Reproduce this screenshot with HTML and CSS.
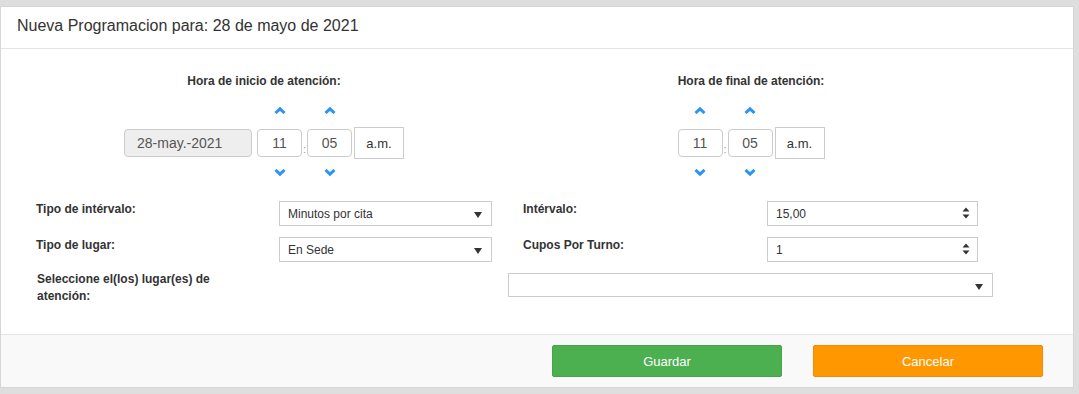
FILE: index.html
```html
<!DOCTYPE html>
<html>
  <head>
    <meta charset="utf-8">
    <title>Nueva Programacion</title>
    <link rel="stylesheet" href="styles.css">
  </head>
  <body>
  <div class="modal">
    <div class="modal-header">
      <h4 class="modal-title">Nueva Programacion para: 28 de mayo de 2021</h4>
    </div>
    <div class="modal-body">
      <div class="times">
        <div class="time-col">
          <div class="time-label">Hora de inicio de atención:</div>
          <div class="picker">
            <div class="date-input">28-may.-2021</div>
            <div class="spin">
              <span class="chev"><svg width="12" height="7" viewBox="0 0 12 7"><polyline points="1.5,6 6,1.8 10.5,6"/></svg></span>
              <div class="time-input">11</div>
              <span class="chev down"><svg width="12" height="7" viewBox="0 0 12 7"><polyline points="1.5,1 6,5.2 10.5,1"/></svg></span>
            </div>
            <span class="colon">:</span>
            <div class="spin">
              <span class="chev"><svg width="12" height="7" viewBox="0 0 12 7"><polyline points="1.5,6 6,1.8 10.5,6"/></svg></span>
              <div class="time-input">05</div>
              <span class="chev down"><svg width="12" height="7" viewBox="0 0 12 7"><polyline points="1.5,1 6,5.2 10.5,1"/></svg></span>
            </div>
            <div class="ampm">a.m.</div>
          </div>
        </div>
        <div class="time-col">
          <div class="time-label">Hora de final de atención:</div>
          <div class="picker">
            <div class="spin">
              <span class="chev"><svg width="12" height="7" viewBox="0 0 12 7"><polyline points="1.5,6 6,1.8 10.5,6"/></svg></span>
              <div class="time-input">11</div>
              <span class="chev down"><svg width="12" height="7" viewBox="0 0 12 7"><polyline points="1.5,1 6,5.2 10.5,1"/></svg></span>
            </div>
            <span class="colon">:</span>
            <div class="spin">
              <span class="chev"><svg width="12" height="7" viewBox="0 0 12 7"><polyline points="1.5,6 6,1.8 10.5,6"/></svg></span>
              <div class="time-input">05</div>
              <span class="chev down"><svg width="12" height="7" viewBox="0 0 12 7"><polyline points="1.5,1 6,5.2 10.5,1"/></svg></span>
            </div>
            <div class="ampm">a.m.</div>
          </div>
        </div>
      </div>

      <div class="form-row">
        <label class="lbl">Tipo de intérvalo:</label>
        <div class="select">Minutos por cita<span class="caret"></span></div>
        <span></span>
        <label class="lbl">Intérvalo:</label>
        <div class="number">15,00<svg class="spinner" width="8" height="12" viewBox="0 0 8 12"><polygon points="4,0.5 7.5,4.5 0.5,4.5"/><polygon points="0.5,7.5 7.5,7.5 4,11.5"/></svg></div>
      </div>
      <div class="form-row">
        <label class="lbl">Tipo de lugar:</label>
        <div class="select">En Sede<span class="caret"></span></div>
        <span></span>
        <label class="lbl">Cupos Por Turno:</label>
        <div class="number">1<svg class="spinner" width="8" height="12" viewBox="0 0 8 12"><polygon points="4,0.5 7.5,4.5 0.5,4.5"/><polygon points="0.5,7.5 7.5,7.5 4,11.5"/></svg></div>
      </div>
      <div class="form-row wide">
        <label class="lbl narrow">Seleccione el(los) lugar(es) de atención:</label>
        <div class="select multi"><span class="caret"></span></div>
      </div>
    </div>
    <div class="modal-footer">
      <button class="btn btn-save">Guardar</button>
      <button class="btn btn-cancel">Cancelar</button>
    </div>
  </div>
  </body>
</html>
```

FILE: styles.css
```css
body { margin: 0; background: #dedede; font-family: "Liberation Sans", Arial, sans-serif; font-size: 12px; color: #333; }

.modal { margin-top: 6px; width: 1074px; box-sizing: border-box; background: #fff; border: 1px solid #d6d6d6; }

.modal-header { padding: 8px 16px 11px; border-bottom: 1px solid #e4e4ec; }
.modal-title { margin: 0; font-size: 16px; font-weight: normal; line-height: 22px; color: #333; }

.modal-body { height: 285px; box-sizing: border-box; padding-top: 24px; }

.times { display: grid; grid-template-columns: 526px 448px; }
.time-col { text-align: center; }
.time-label { font-weight: bold; line-height: 17px; margin-bottom: 9px; }
.picker { display: flex; justify-content: center; align-items: flex-start; }

.spin { display: flex; flex-direction: column; align-items: center; }
.chev { height: 22px; display: flex; align-items: center; justify-content: center; margin-bottom: 8px; }
.chev.down { margin: 4px 0 0; }
.chev polyline { fill: none; stroke: #2d93f5; stroke-width: 3; }

.date-input, .time-input, .ampm { box-sizing: border-box; border: 1px solid #ccc; color: #555; font-size: 14px; display: flex; align-items: center; }
.date-input { width: 128px; height: 28px; margin: 30px 5px 0 0; padding-left: 12px; background: #eee; border-radius: 4px; }
.time-input { width: 45px; height: 28px; justify-content: center; border-radius: 4px; background: #fff; }
.ampm { width: 50px; height: 32px; margin: 28px 0 0 2px; justify-content: center; font-size: 13px; color: #333; }
.colon { width: 5px; margin-top: 43px; font-size: 11px; line-height: 14px; color: #999; text-align: center; }

.form-row { display: grid; grid-template-columns: 243px 213px 31px 244px 211px; margin: 18px 0 0 35px; }
.form-row + .form-row { margin-top: 11px; }
.form-row.wide { grid-template-columns: 472px 485px; margin-top: 9px; }

.lbl { font-weight: bold; line-height: 17px; }
.lbl.narrow { width: 200px; padding-left: 1px; }

.select, .number { position: relative; box-sizing: border-box; height: 25px; border: 1px solid #ccc; padding-left: 8px; display: flex; align-items: center; font-size: 12px; color: #333; background: #fff; }
.select.multi { height: 24px; margin-top: 2px; }
.caret { position: absolute; right: 9px; top: 10px; width: 0; height: 0; border-left: 4px solid transparent; border-right: 4px solid transparent; border-top: 6px solid #333; }
.spinner { position: absolute; right: 7px; top: 5px; }
.spinner polygon { fill: #333; }

.modal-footer { height: 52px; box-sizing: content-box; border-top: 1px solid #e5e5e5; background: #f9f9f9; display: flex; justify-content: flex-end; align-items: flex-start; gap: 31px; padding-right: 30px; }
.btn { margin-top: 10px; width: 230px; height: 32px; border: 1px solid; border-radius: 2px; color: #fff; font-family: "Liberation Sans", Arial, sans-serif; font-size: 13px; }
.btn-save { background: #4caf50; border-color: #46a34a; }
.btn-cancel { background: #ff9800; border-color: #f08c00; }
```
